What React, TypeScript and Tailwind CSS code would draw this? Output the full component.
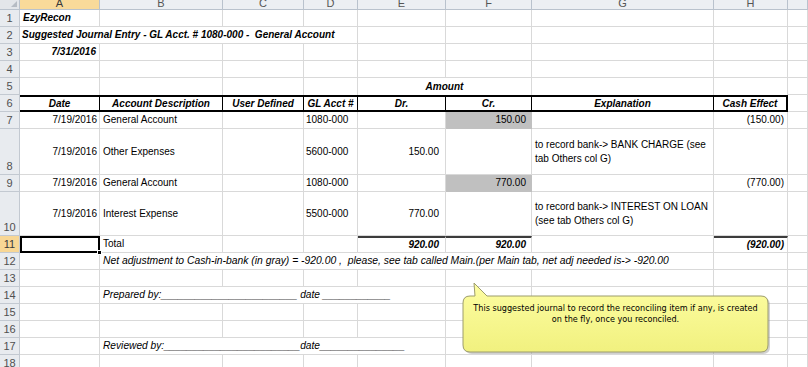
import React from "react";

const GL = "border-r border-b border-[#d9d9d9]";

function Cell({
  children,
  cls = "",
  span = "",
  grid = GL,
  wrap = false,
}: {
  children?: React.ReactNode;
  cls?: string;
  span?: string;
  grid?: string;
  wrap?: boolean;
}) {
  return (
    <div
      className={`${grid} ${span} flex items-center overflow-visible ${
        wrap ? "whitespace-normal leading-[14px]" : "whitespace-pre leading-[12px]"
      } text-black ${cls.includes("text-[") ? "" : "text-[10px]"} ${cls}`}
    >
      {wrap ? <span>{children}</span> : children}
    </div>
  );
}

function RH({ n, hl = false, bottom = false }: { n: number; hl?: boolean; bottom?: boolean }) {
  return (
    <div
      className={`border-r border-b border-[#c3c9d1] flex justify-center text-[11px] leading-[13px] ${
        bottom ? "items-end pb-[1px]" : "items-center"
      } ${hl ? "bg-[#f8d795] text-[#3a3a3a]" : "bg-[#e8ebef] text-[#505050]"}`}
    >
      {n}
    </div>
  );
}

function CH({ l, hl = false }: { l: string; hl?: boolean }) {
  return (
    <div
      className={`border-r border-b border-[#b9c2cd] flex items-end justify-center overflow-hidden text-[11px] leading-[13px] ${
        hl ? "bg-[#f9da9a] text-[#3a3a3a]" : "bg-[#eceff3] text-[#555]"
      }`}
    >
      <span className="-mb-[1px]">{l}</span>
    </div>
  );
}

const E = () => <Cell />;

export default function App() {
  const bi = "font-bold italic";
  const hdr6 = "border-t-2 border-b-2 border-black justify-center font-bold italic";
  const r5 = "border-r border-[#d9d9d9]";
  return (
    <div
      className="relative w-[808px] h-[367px] overflow-hidden bg-white"
      style={{ fontFamily: '"Liberation Sans", Arial, sans-serif' }}
    >
      <div className="grid grid-cols-[20px_80px_123px_81px_54px_88px_86px_182px_74px_20px] grid-rows-[10px_repeat(7,17px)_46px_17px_44px_repeat(8,17px)]">
        {/* column header row */}
        <div className="bg-[#e3e6ea] border-r border-b border-[#b9c2cd] relative">
          <div className="absolute right-[2px] bottom-[2px] w-0 h-0 border-l-[6px] border-l-transparent border-b-[6px] border-b-[#b6bcc4]" />
        </div>
        <CH l="A" hl />
        <CH l="B" />
        <CH l="C" />
        <CH l="D" />
        <CH l="E" />
        <CH l="F" />
        <CH l="G" />
        <CH l="H" />
        <CH l="" />

        {/* row 1 */}
        <RH n={1} />
        <Cell cls={`${bi} pl-[3px]`}>EzyRecon</Cell>
        <E /><E /><E /><E /><E /><E /><E /><E />

        {/* row 2 */}
        <RH n={2} />
        <Cell span="col-span-4" cls={`${bi} pl-[2px]`}>
          {"Suggested Journal Entry - GL Acct. # 1080-000 -  General Account"}
        </Cell>
        <E /><E /><E /><E /><E />

        {/* row 3 */}
        <RH n={3} />
        <Cell cls={`${bi} justify-end pr-[3px]`}>7/31/2016</Cell>
        <E /><E /><E /><E /><E /><E /><E /><E />

        {/* row 4 */}
        <RH n={4} />
        <E /><E /><E /><E /><E /><E /><E /><E /><E />

        {/* row 5 */}
        <RH n={5} />
        <Cell grid={r5} />
        <Cell grid={r5} />
        <Cell grid={r5} />
        <Cell grid={r5} />
        <Cell grid={r5} span="col-span-2" cls={`${bi} justify-center`}>
          Amount
        </Cell>
        <Cell grid={r5} />
        <Cell grid={r5} />
        <E />

        {/* row 6 */}
        <RH n={6} />
        <Cell grid={r5} cls={hdr6}>Date</Cell>
        <Cell grid={r5} cls={hdr6}>Account Description</Cell>
        <Cell grid={r5} cls={hdr6}>User Defined</Cell>
        <Cell grid={r5} cls={hdr6}>GL Acct #</Cell>
        <Cell grid={r5} cls={hdr6}>Dr.</Cell>
        <Cell grid={r5} cls={hdr6}>Cr.</Cell>
        <Cell grid={r5} cls={hdr6}>Explanation</Cell>
        <Cell grid="" cls={`${hdr6} border-r-2`}>Cash Effect</Cell>
        <E />

        {/* row 7 */}
        <RH n={7} />
        <Cell cls="justify-end pr-[2px]">7/19/2016</Cell>
        <Cell cls="pl-[3px]">General Account</Cell>
        <E />
        <Cell cls="pl-[2px]">1080-000</Cell>
        <E />
        <Cell cls="justify-end pr-[5px] bg-[#c0c0c0]" grid="border-r border-b border-[#c0c0c0]">150.00</Cell>
        <E />
        <Cell cls="justify-end pr-[3px]">(150.00)</Cell>
        <E />

        {/* row 8 */}
        <RH n={8} bottom />
        <Cell cls="justify-end pr-[2px]">7/19/2016</Cell>
        <Cell cls="pl-[3px]">Other Expenses</Cell>
        <E />
        <Cell cls="pl-[2px]">5600-000</Cell>
        <Cell cls="justify-end pr-[6px]">150.00</Cell>
        <E />
        <Cell wrap cls="pl-[3px] pr-[2px]">
          to record bank-&gt; BANK CHARGE (see tab Others col G)
        </Cell>
        <E />
        <E />

        {/* row 9 */}
        <RH n={9} />
        <Cell cls="justify-end pr-[2px]">7/19/2016</Cell>
        <Cell cls="pl-[3px]">General Account</Cell>
        <E />
        <Cell cls="pl-[2px]">1080-000</Cell>
        <E />
        <Cell cls="justify-end pr-[5px] bg-[#c0c0c0]" grid="border-r border-b border-[#c0c0c0]">770.00</Cell>
        <E />
        <Cell cls="justify-end pr-[3px]">(770.00)</Cell>
        <E />

        {/* row 10 */}
        <RH n={10} bottom />
        <Cell cls="justify-end pr-[2px]">7/19/2016</Cell>
        <Cell cls="pl-[3px]">Interest Expense</Cell>
        <E />
        <Cell cls="pl-[2px]">5500-000</Cell>
        <Cell cls="justify-end pr-[6px]">770.00</Cell>
        <E />
        <Cell wrap cls="pl-[3px] pr-[2px]">
          to record bank-&gt; INTEREST ON LOAN (see tab Others col G)
        </Cell>
        <E />
        <E />

        {/* row 11 */}
        <RH n={11} hl />
        <div className="relative border-2 border-black">
          <div className="absolute -right-[4px] -bottom-[4px] w-[5px] h-[5px] bg-black border border-white" />
        </div>
        <Cell cls="pl-[3px]">Total</Cell>
        <E />
        <E />
        <Cell cls={`${bi} justify-end pr-[6px] border-t-2 border-t-[#3c3c3c]`}>920.00</Cell>
        <Cell cls={`${bi} justify-end pr-[5px] border-t-2 border-t-[#3c3c3c]`}>920.00</Cell>
        <E />
        <Cell cls={`${bi} justify-end pr-[3px] border-t-2 border-t-[#3c3c3c]`}>(920.00)</Cell>
        <E />

        {/* row 12 */}
        <RH n={12} />
        <E />
        <Cell span="col-span-6" cls="italic pl-[3px] text-[10.35px]">
          {"Net adjustment to Cash-in-bank (in gray) = -920.00 ,  please, see tab called Main.(per Main tab, net adj needed is-> -920.00"}
        </Cell>
        <E />
        <E />

        {/* row 13 */}
        <RH n={13} />
        <E /><E /><E /><E /><E /><E /><E /><E /><E />

        {/* row 14 */}
        <RH n={14} />
        <E />
        <Cell span="col-span-4" cls="italic pl-[3px] text-[10.2px]">
          {"Prepared by:________________________ date ____________"}
        </Cell>
        <E /><E /><E /><E />

        {/* row 15 */}
        <RH n={15} />
        <E /><E /><E /><E /><E /><E /><E /><E /><E />

        {/* row 16 */}
        <RH n={16} />
        <E /><E /><E /><E /><E /><E /><E /><E /><E />

        {/* row 17 */}
        <RH n={17} />
        <E />
        <Cell span="col-span-4" cls="italic pl-[3px] text-[10.2px]">
          {"Reviewed by:________________________date_______________"}
        </Cell>
        <E /><E /><E /><E />

        {/* row 18 */}
        <RH n={18} />
        <E /><E /><E /><E /><E /><E /><E /><E /><E />
      </div>

      {/* comment callout */}
      <div className="absolute left-[460px] top-[280px] w-[315px] h-[80px]">
        <svg width="315" height="80" viewBox="0 0 315 80" className="absolute left-0 top-0">
          <defs>
            <linearGradient id="cg" x1="0" y1="0" x2="0" y2="1">
              <stop offset="0" stopColor="#fdfda2" />
              <stop offset="1" stopColor="#f1f17f" />
            </linearGradient>
          </defs>
          <path
            d="M 12 18 L 17 18 L 16 5 L 29 18 L 303 18 Q 310 18 310 25 L 310 67 Q 310 74 303 74 L 12 74 Q 5 74 5 67 L 5 25 Q 5 18 12 18 Z"
            fill="#9a9a9a"
            opacity="0.45"
          />
          <path
            d="M 10 16 L 15 16 L 14 3 L 27 16 L 301 16 Q 308 16 308 23 L 308 65 Q 308 72 301 72 L 10 72 Q 3 72 3 65 L 3 23 Q 3 16 10 16 Z"
            fill="url(#cg)"
            stroke="#9c9c6c"
            strokeWidth="1"
          />
        </svg>
        <div
          className="absolute left-[3px] top-[23px] w-[305px] text-center text-[8.1px] leading-[11px] text-black"
          style={{ fontFamily: '"DejaVu Sans", Verdana, sans-serif' }}
        >
          This suggested journal to record the reconciling item if any, is created
          <br />
          on the fly, once you reconciled.
        </div>
      </div>
    </div>
  );
}
